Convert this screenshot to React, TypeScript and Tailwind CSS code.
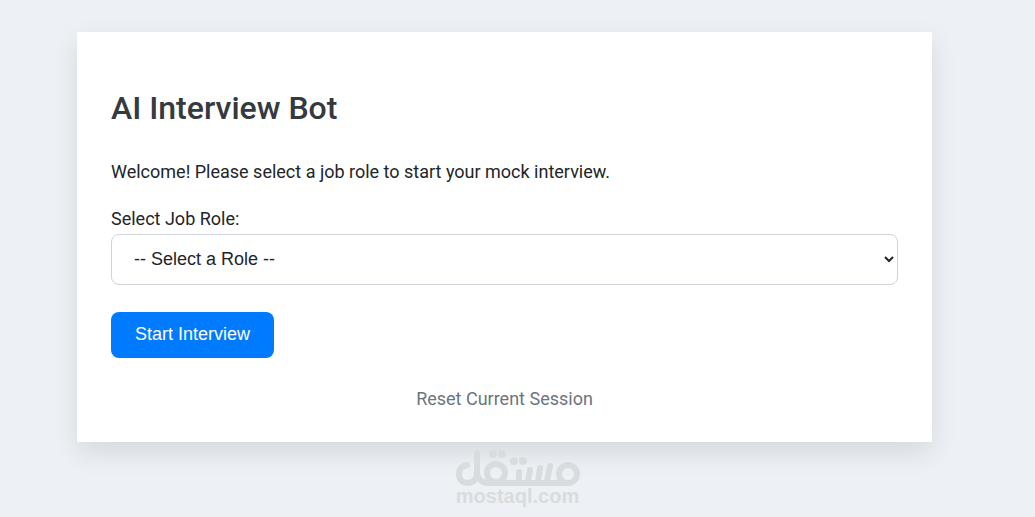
import React, { useState } from 'react';

const ROLES = ['Software Engineer', 'Data Scientist', 'Product Manager'];

const Watermark: React.FC = () => (
  <div className="pointer-events-none absolute inset-x-0 bottom-[11px] flex flex-col items-center text-[#d9dcdf]">
    <svg
      width="126"
      height="38"
      viewBox="0 0 126 38"
      fill="none"
      stroke="currentColor"
      strokeWidth="6"
      strokeLinecap="round"
      strokeLinejoin="round"
    >
      <path d="M22 5V25C22 31 18 35 13 35C7 35 4 31 4 26C4 21 7 18 12 17" />
      <path d="M22 25C23 31 27 35 33 35H114" />
      <circle cx="41" cy="25" r="9" />
      <circle cx="113" cy="26" r="9" />
      <path d="M64 24V33M75 22L73 33M85 20L83 33M95 18L92 33" />
      <g fill="currentColor" stroke="none">
        <circle cx="38" cy="6" r="4" />
        <circle cx="47" cy="6" r="4" />
        <circle cx="59" cy="13" r="4" />
        <circle cx="68" cy="13" r="4" />
      </g>
    </svg>
    <span className="font-['Liberation_Sans',sans-serif] text-[20px] leading-5 font-bold">
      mostaql.com
    </span>
  </div>
);

const App: React.FC = () => {
  const [role, setRole] = useState<string>('');

  return (
    <div className="relative min-h-screen bg-[#edf0f5] pt-8 pr-[103px] pb-[75px] pl-[77px] font-[Roboto,sans-serif] text-lg text-[#212529]">
      <main className="bg-white px-[34px] pt-14 pb-[31px] shadow-[0_10px_25px_rgba(0,0,0,0.1)]">
        <h1 className="text-[32px] leading-10 font-medium text-[#343a40]">
          AI Interview Bot
        </h1>
        <p className="mt-8 leading-6">
          Welcome! Please select a job role to start your mock interview.
        </p>
        <form onSubmit={(e) => e.preventDefault()}>
          <label htmlFor="role" className="mt-[23px] block leading-6">
            Select Job Role:
          </label>
          <select
            id="role"
            value={role}
            onChange={(e) => setRole(e.target.value)}
            className="mt-[3px] block h-[51px] w-full rounded-lg border border-[#ced4da] bg-white pb-0.5 pl-[18px] font-['Liberation_Sans',sans-serif]"
          >
            <option value="">-- Select a Role --</option>
            {ROLES.map((el) => (
              <option key={el} value={el}>
                {el}
              </option>
            ))}
          </select>
          <button
            type="submit"
            className="mt-[27px] block h-[46px] rounded-lg bg-[#007bff] px-6 pb-0.5 font-['Liberation_Sans',sans-serif] text-white"
          >
            Start Interview
          </button>
        </form>
        <div className="mt-[29px] text-center leading-6">
          <a href="#reset" className="text-[#6c757d]">
            Reset Current Session
          </a>
        </div>
      </main>
      <Watermark />
    </div>
  );
};

export default App;
